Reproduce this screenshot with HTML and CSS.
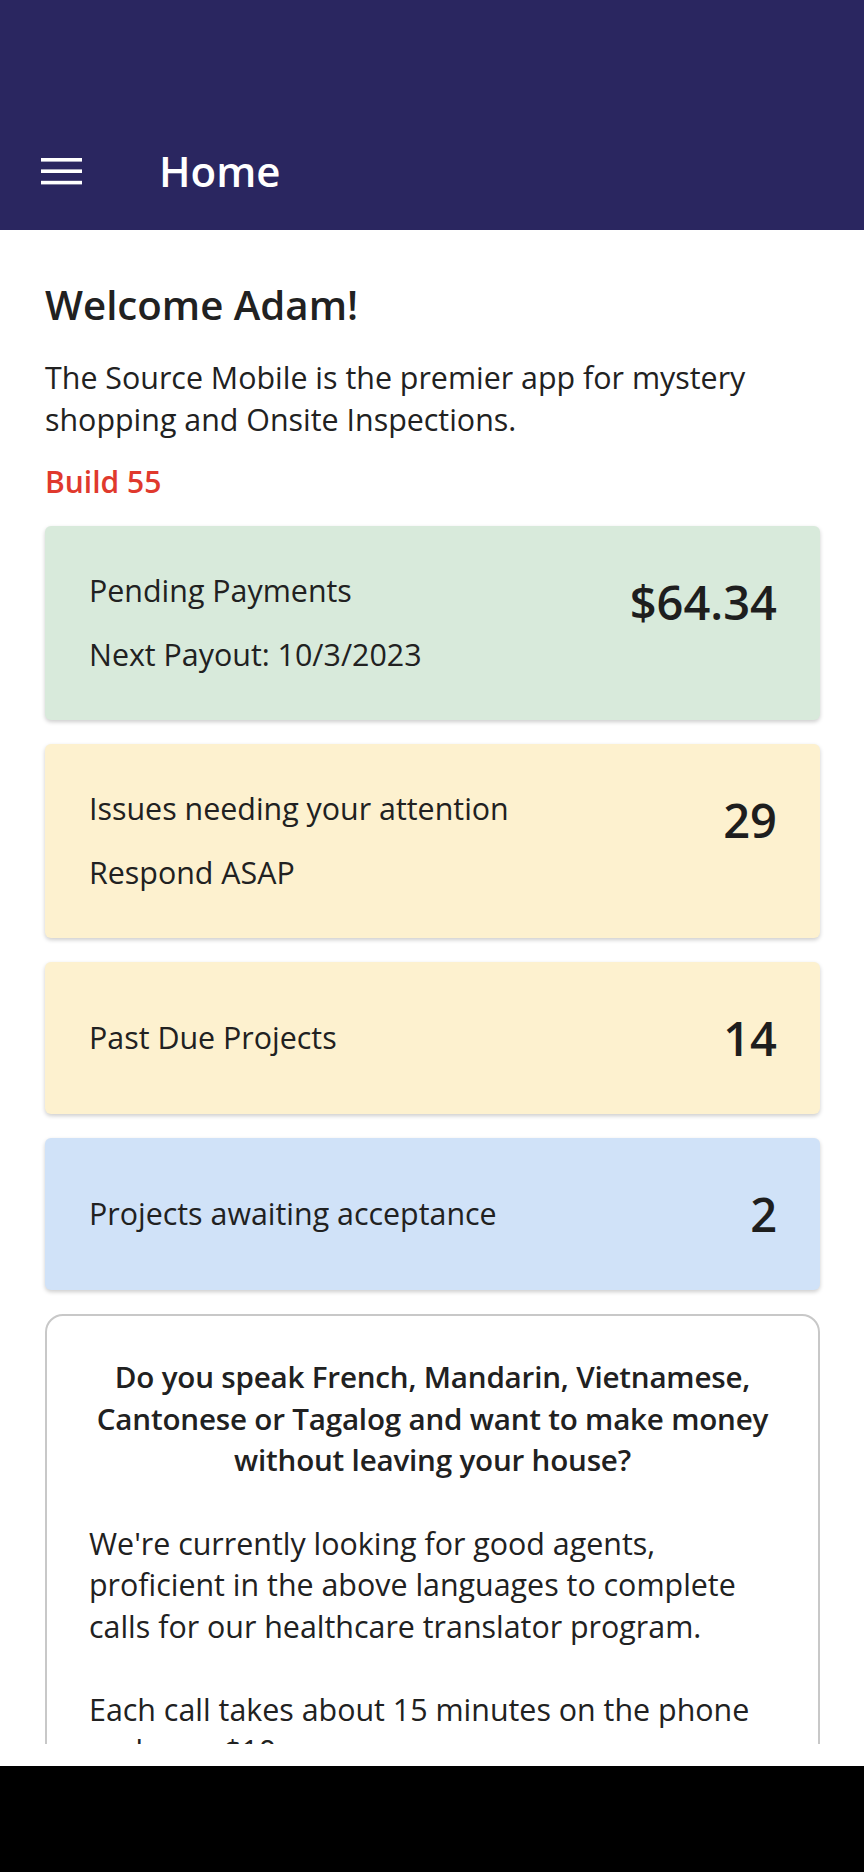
FILE: index.html
```html
<!DOCTYPE html>
<html lang="en">
<head>
<meta charset="utf-8">
<title>Home</title>
<link rel="stylesheet" href="styles.css">
</head>
<body>
<div class="app">
  <header class="appbar">
    <div class="toolbar">
      <svg class="menu-icon" width="41" height="27" viewBox="0 0 41 27" aria-hidden="true">
        <rect x="0" y="0" width="41" height="3.6" fill="#ffffff"/>
        <rect x="0" y="11.4" width="41" height="3.6" fill="#ffffff"/>
        <rect x="0" y="22.8" width="41" height="3.6" fill="#ffffff"/>
      </svg>
      <h1 class="title">Home</h1>
    </div>
  </header>

  <main class="content">
    <h2 class="welcome">Welcome Adam!</h2>
    <p class="intro">The Source Mobile is the premier app for mystery shopping and Onsite Inspections.</p>
    <p class="build">Build 55</p>

    <div class="card card-green">
      <div class="card-text">
        <div class="card-line">Pending Payments</div>
        <div class="card-line second">Next Payout: 10/3/2023</div>
      </div>
      <div class="card-value">$64.34</div>
    </div>

    <div class="card card-yellow">
      <div class="card-text">
        <div class="card-line">Issues needing your attention</div>
        <div class="card-line second">Respond ASAP</div>
      </div>
      <div class="card-value">29</div>
    </div>

    <div class="card card-yellow single">
      <div class="card-text">
        <div class="card-line">Past Due Projects</div>
      </div>
      <div class="card-value">14</div>
    </div>

    <div class="card card-blue single">
      <div class="card-text">
        <div class="card-line">Projects awaiting acceptance</div>
      </div>
      <div class="card-value">2</div>
    </div>

    <div class="promo">
      <p class="promo-head">Do you speak French, Mandarin, Vietnamese, Cantonese or Tagalog and want to make money without leaving your house?</p>
      <p class="promo-body">We're currently looking for good agents, proficient in the above languages to complete calls for our healthcare translator program.<br><br>Each call takes about 15 minutes on the phone and earn $10.</p>
    </div>
  </main>

  <div class="bottom-gap"></div>
  <div class="navbar"></div>
</div>
</body>
</html>
```

FILE: styles.css
```css
* {
  box-sizing: border-box;
}

html, body {
  margin: 0;
  padding: 0;
  background: #ffffff;
}

body {
  font-family: "Open Sans", "Noto Sans", "Liberation Sans", sans-serif;
  color: #212121;
}

.app {
  width: 864px;
  height: 1872px;
  display: flex;
  flex-direction: column;
  overflow: hidden;
}

.appbar {
  height: 230px;
  flex: 0 0 230px;
  background: #2a2660;
  display: flex;
  flex-direction: column;
  justify-content: flex-end;
}

.toolbar {
  height: 123px;
  display: flex;
  align-items: center;
  padding-left: 41px;
  padding-top: 5px;
}

.menu-icon {
  display: block;
  flex: 0 0 auto;
}

.title {
  margin: 0 0 0 77px;
  font-size: 42px;
  font-weight: 600;
  line-height: 60px;
  color: #ffffff;
}

.content {
  flex: 0 0 1514px;
  height: 1514px;
  overflow: hidden;
  padding: 45px 44px 0 45px;
}

.welcome {
  margin: 0;
  font-size: 40.2px;
  font-weight: 600;
  line-height: 60px;
  color: #212121;
}

.intro {
  margin: 22px 0 0;
  font-size: 30.4px;
  line-height: 42px;
}

.build {
  margin: 20px 0 0;
  font-size: 30px;
  line-height: 42px;
  font-weight: 600;
  color: #e0392d;
}

.card {
  margin-top: 23px;
  border-radius: 6px;
  padding: 44px 43px 44px 44px;
  display: flex;
  justify-content: space-between;
  align-items: flex-start;
  box-shadow: 0 2px 4px rgba(0, 0, 0, 0.2);
}

.card + .card {
  margin-top: 24px;
}

.card.single {
  align-items: center;
}

.card-green {
  background: #d8eadb;
}

.card-yellow {
  background: #fdf1cf;
}

.card-blue {
  background: #d0e2f8;
}

.card-line {
  font-size: 30.4px;
  line-height: 42px;
}

.card-line.second {
  margin-top: 22px;
}

.card-value {
  font-size: 47px;
  font-weight: 600;
  line-height: 64px;
  color: #1e1e1e;
}

.promo {
  margin-top: 24px;
  border: 2px solid #c8c8c8;
  border-radius: 18px;
  padding: 40px 42px 40px 42px;
}

.promo-head {
  margin: 0;
  text-align: center;
  font-size: 29.6px;
  line-height: 41.5px;
  font-weight: 600;
  letter-spacing: -0.2px;
}

.promo-body {
  margin: 42px 0 0;
  font-size: 30.4px;
  line-height: 41.5px;
}

.bottom-gap {
  flex: 0 0 22px;
  background: #ffffff;
}

.navbar {
  flex: 0 0 106px;
  background: #000000;
}
```
